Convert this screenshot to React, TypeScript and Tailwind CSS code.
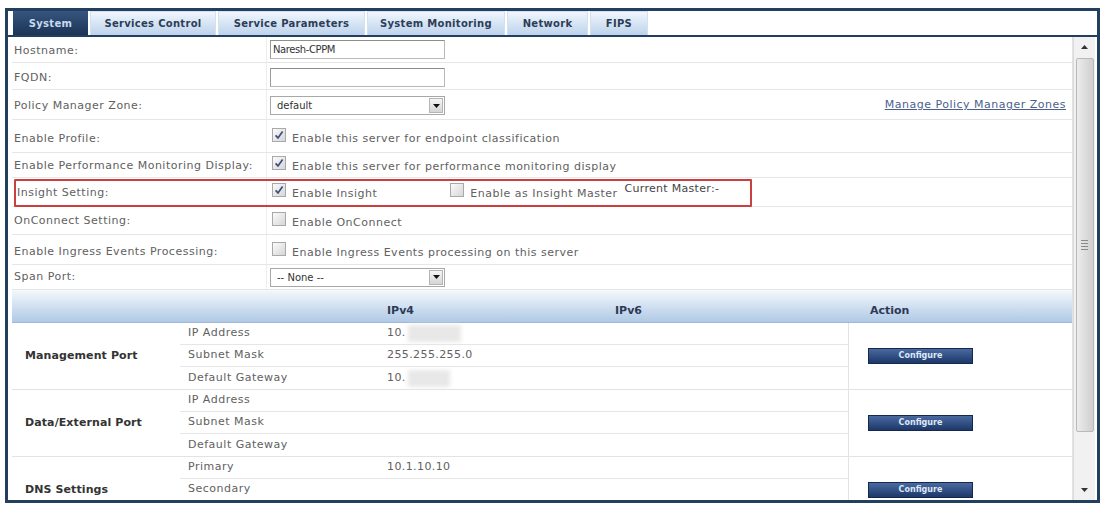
import React from "react";

const Check = ({ checked }: { checked?: boolean }) => (
  <span className="inline-flex w-[14px] h-[14px] shrink-0 items-center justify-center border border-[#a9a9a9] bg-gradient-to-br from-[#fbfbfb] to-[#d6d6d6] mb-[9px]">
    {checked && (
      <svg width="10" height="10" viewBox="0 0 10 10">
        <path d="M1.6 5.4 L4 7.9 L8.6 1.4" fill="none" stroke="#3a4f7c" strokeWidth="1.7" />
      </svg>
    )}
  </span>
);

const Select = ({ value }: { value: string }) => (
  <div className="w-[175px] h-[19px] border border-[#a8a8a8] bg-white flex items-center">
    <span className="flex-1 pl-[6px] text-[10px] text-[#333]">{value}</span>
    <span className="w-[14px] h-[15px] mr-[1px] border border-[#b4b4b4] bg-gradient-to-b from-[#f6f6f6] to-[#d5d5d5] flex items-center justify-center">
      <svg width="7" height="4" viewBox="0 0 7 4">
        <path d="M0 0h7L3.5 4z" fill="#111" />
      </svg>
    </span>
  </div>
);

const Input = ({ value }: { value?: string }) => (
  <div className="w-[175px] h-[19px] border border-[#b9b9b9] border-t-[#8e8e8e] border-l-[#9a9a9a] bg-white pl-[2px] flex items-center text-[10px] tracking-[-0.4px] text-[#333]">
    {value}
  </div>
);

const Label = ({ children }: { children: React.ReactNode }) => (
  <span className="text-[11px] tracking-[0.5px] text-[#616161]">{children}</span>
);

const tabs = [
  { name: "System", w: "w-[75px]", active: true },
  { name: "Services Control", w: "w-[126px]" },
  { name: "Service Parameters", w: "w-[147px]" },
  { name: "System Monitoring", w: "w-[138px]" },
  { name: "Network", w: "w-[81px]" },
  { name: "FIPS", w: "w-[58px]" },
];

const groups = [
  {
    name: "Management Port",
    rows: [
      { k: "IP Address", v: "10.", blur: "w-[53px]" },
      { k: "Subnet Mask", v: "255.255.255.0" },
      { k: "Default Gateway", v: "10.", blur: "w-[42px]" },
    ],
  },
  {
    name: "Data/External Port",
    rows: [
      { k: "IP Address", v: "" },
      { k: "Subnet Mask", v: "" },
      { k: "Default Gateway", v: "" },
    ],
  },
  {
    name: "DNS Settings",
    rows: [
      { k: "Primary", v: "10.1.10.10" },
      { k: "Secondary", v: "" },
      { k: "", v: "" },
    ],
  },
];

export default function App() {
  return (
    <div className="w-[1103px] h-[507px] bg-white pt-[8px] pl-[5px] font-['DejaVu_Sans',sans-serif] overflow-hidden">
      <div className="w-[1095px] h-[495px] border-[3px] border-[#233f5f] flex flex-col">
        {/* tab strip */}
        <div className="h-[26px] shrink-0 flex items-stretch gap-[2px] pl-[5px] border-b-[2px] border-[#233f5f] bg-white">
          {tabs.map((t) =>
            t.active ? (
              <div key={t.name} className={`${t.w} flex items-center justify-center bg-gradient-to-b from-[#36557f] to-[#1c3456] text-[10px] font-bold tracking-[0.3px] text-[#c7daf0]`}>
                {t.name}
              </div>
            ) : (
              <div key={t.name} className={`${t.w} flex items-center justify-center border-x border-t border-[#d3e0ee] bg-gradient-to-b from-[#f0f6fc] to-[#bdd3ec] text-[10px] font-bold tracking-[0.3px] text-[#2d3d58]`}>
                {t.name}
              </div>
            )
          )}
        </div>

        <div className="flex-1 flex overflow-hidden">
          <div className="flex-1 pl-[4px] overflow-hidden">
            <div className="w-[1061px] border-r border-[#e2e2e2]">
              {/* form rows */}
              <div className="h-[26px] flex border-b border-[#e6e6e6]">
                <div className="w-[255px] pl-[2px] pt-[3px] flex items-center border-r border-[#eeeeee]"><Label>Hostname:</Label></div>
                <div className="flex-1 pl-[3px] flex items-center"><Input value="Naresh-CPPM" /></div>
              </div>
              <div className="h-[27px] flex border-b border-[#e6e6e6]">
                <div className="w-[255px] pl-[2px] pt-[5px] flex items-center border-r border-[#eeeeee]"><Label>FQDN:</Label></div>
                <div className="flex-1 pl-[3px] pt-[2px] flex items-center"><Input /></div>
              </div>
              <div className="h-[30px] flex border-b border-[#e6e6e6]">
                <div className="w-[255px] pl-[2px] pt-[3px] flex items-center border-r border-[#eeeeee]"><Label>Policy Manager Zone:</Label></div>
                <div className="flex-1 pl-[3px] pt-[2px] flex items-center">
                  <Select value="default" />
                  <a className="ml-auto mr-[6px] text-[11px] tracking-[0.5px] text-[#4c5f8c] underline">Manage Policy Manager Zones</a>
                </div>
              </div>
              <div className="h-[33px] flex border-b border-[#e6e6e6]">
                <div className="w-[255px] pl-[2px] pt-[7px] flex items-center border-r border-[#eeeeee]"><Label>Enable Profile:</Label></div>
                <div className="flex-1 pl-[5px] pt-[7px] flex items-center gap-[6px]">
                  <Check checked />
                  <Label>Enable this server for endpoint classification</Label>
                </div>
              </div>
              <div className="h-[25px] flex border-b border-[#e6e6e6]">
                <div className="w-[255px] pl-[2px] pt-[3px] flex items-center border-r border-[#eeeeee]"><Label>Enable Performance Monitoring Display:</Label></div>
                <div className="flex-1 pl-[5px] pt-[5px] flex items-center gap-[6px]">
                  <Check checked />
                  <Label>Enable this server for performance monitoring display</Label>
                </div>
              </div>
              <div className="relative h-[29px] flex border-b border-[#e6e6e6]">
                <div className="w-[255px] pl-[5px] pt-[2px] flex items-center border-r border-[#eeeeee]"><Label>Insight Setting:</Label></div>
                <div className="flex-1 pl-[5px] pt-[4px] flex items-center gap-[6px]">
                  <Check checked />
                  <Label>Enable Insight</Label>
                  <span className="ml-[67px] flex"><Check /></span>
                  <Label>Enable as Insight Master</Label>
                  <span className="ml-[1px] mb-[10px] text-[11px] tracking-[0.3px] text-[#444]">Current Master:-</span>
                </div>
                <div className="absolute left-[2px] top-[1px] w-[738px] h-[28px] border-2 border-[#c9403f] rounded-[1px]" />
              </div>
              <div className="h-[28px] flex border-b border-[#e6e6e6]">
                <div className="w-[255px] pl-[2px] pt-[1px] flex items-center border-r border-[#eeeeee]"><Label>OnConnect Setting:</Label></div>
                <div className="flex-1 pl-[5px] pt-[5px] flex items-center gap-[6px]">
                  <Check />
                  <Label>Enable OnConnect</Label>
                </div>
              </div>
              <div className="h-[30px] flex border-b border-[#e6e6e6]">
                <div className="w-[255px] pl-[2px] pt-[6px] flex items-center border-r border-[#eeeeee]"><Label>Enable Ingress Events Processing:</Label></div>
                <div className="flex-1 pl-[5px] pt-[8px] flex items-center gap-[6px]">
                  <Check />
                  <Label>Enable Ingress Events processing on this server</Label>
                </div>
              </div>
              <div className="h-[25px] flex border-b border-[#e6e6e6]">
                <div className="w-[255px] pl-[2px] flex items-center border-r border-[#eeeeee]"><Label>Span Port:</Label></div>
                <div className="flex-1 pl-[3px] flex items-center"><Select value="-- None --" /></div>
              </div>

              {/* table header */}
              <div className="h-[33px] flex items-center pt-[10px] bg-gradient-to-b from-[#f5f8fc] to-[#b0c9e6] border-b border-[#9fb8d8] text-[11px] font-bold text-[#2c3a56]">
                <div className="w-[375px]" />
                <div className="w-[228px]">IPv4</div>
                <div className="w-[233px]">IPv6</div>
                <div className="pl-[22px]">Action</div>
              </div>

              {/* groups */}
              {groups.map((g) => (
                <div key={g.name} className="flex border-b border-[#e3e3e3]">
                  <div className="w-[168px] pl-[13px] flex items-center text-[11px] font-bold tracking-[0.1px] text-[#333]">{g.name}</div>
                  <div className="w-[668px] flex flex-col">
                    {g.rows.map((r, i) => (
                      <div key={i} className={`h-[22px] flex items-center text-[11px] tracking-[0.5px] text-[#616161] ${i < 2 ? "border-b border-[#e6e6e6]" : ""}`}>
                        <div className="w-[207px] pl-[8px]">{r.k}</div>
                        <div className="w-[228px] flex items-center tracking-[0.4px]">
                          {r.v}
                          {r.blur && <span className={`${r.blur} h-[17px] ml-[2px] bg-[#e8e8e8] blur-[2px]`} />}
                        </div>
                        <div className="flex-1" />
                      </div>
                    ))}
                  </div>
                  <div className="flex-1 border-l border-[#e3e3e3] flex items-center pl-[19px]">
                    <button className="w-[105px] h-[16px] border border-[#13284b] bg-gradient-to-b from-[#4a6aa0] to-[#1d386a] text-[8px] font-bold text-[#dfe8f5]">
                      Configure
                    </button>
                  </div>
                </div>
              ))}
            </div>
          </div>

          {/* scrollbar */}
          <div className="w-[22px] shrink-0 mr-[2px] bg-[#f1f1f1] border-l border-[#dcdcdc] flex flex-col items-center">
            <div className="h-[20px] flex items-center justify-center">
              <svg width="7" height="4" viewBox="0 0 7 4"><path d="M3.5 0L7 4H0z" fill="#333" /></svg>
            </div>
            <div className="w-[18px] h-[374px] mt-[1px] rounded-[2px] border border-[#b9b9b9] bg-gradient-to-r from-[#ececec] to-[#cfcfcf] flex items-center justify-center">
              <div className="flex flex-col gap-[2px]">
                <span className="w-[7px] h-px bg-[#8a8a8a]" />
                <span className="w-[7px] h-px bg-[#8a8a8a]" />
                <span className="w-[7px] h-px bg-[#8a8a8a]" />
                <span className="w-[7px] h-px bg-[#8a8a8a]" />
              </div>
            </div>
            <div className="flex-1" />
            <div className="h-[20px] flex items-center justify-center">
              <svg width="7" height="4" viewBox="0 0 7 4"><path d="M0 0h7L3.5 4z" fill="#333" /></svg>
            </div>
          </div>
        </div>
      </div>
    </div>
  );
}
